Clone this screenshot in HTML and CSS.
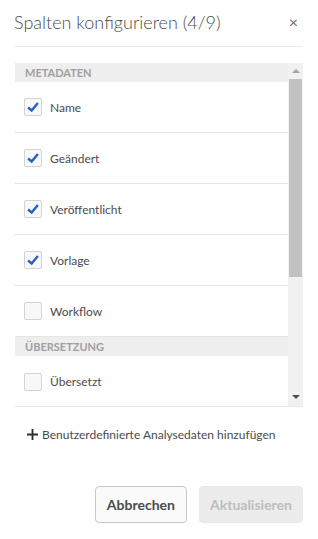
FILE: index.html
```html
<!DOCTYPE html>
<html lang="de">
<head>
    <meta charset="UTF-8">
    <meta name="viewport" content="width=device-width, initial-scale=1.0">
    <title>Spalten konfigurieren</title>
    <link rel="stylesheet" href="styles.css">
</head>
<body>
    <div class="dialog">
        <div class="dialog-header">
            <h1>Spalten konfigurieren (4/9)</h1>
            <span class="close">&times;</span>
        </div>

        <!-- Column list with scrollbar -->
        <div class="column-list">
            <div class="items">
                <div class="group-title">METADATEN</div>
                <label class="item"><span class="check checked"><svg viewBox="0 0 18 18"><path d="M3.5 9.5 L7.5 13 L14.5 4.5" /></svg></span>Name</label>
                <label class="item"><span class="check checked"><svg viewBox="0 0 18 18"><path d="M3.5 9.5 L7.5 13 L14.5 4.5" /></svg></span>Geändert</label>
                <label class="item"><span class="check checked"><svg viewBox="0 0 18 18"><path d="M3.5 9.5 L7.5 13 L14.5 4.5" /></svg></span>Veröffentlicht</label>
                <label class="item"><span class="check checked"><svg viewBox="0 0 18 18"><path d="M3.5 9.5 L7.5 13 L14.5 4.5" /></svg></span>Vorlage</label>
                <label class="item"><span class="check"></span>Workflow</label>
                <div class="group-title">ÜBERSETZUNG</div>
                <label class="item"><span class="check"></span>Übersetzt</label>
            </div>
            <div class="scrollbar">
                <span class="arrow up"></span>
                <div class="thumb"></div>
                <span class="arrow down"></span>
            </div>
        </div>

        <div class="add-custom">
            <svg class="plus" viewBox="0 0 12 12"><path d="M6 0 V12 M0 6 H12" /></svg>
            Benutzerdefinierte Analysedaten hinzufügen
        </div>

        <div class="actions">
            <button class="btn">Abbrechen</button>
            <button class="btn btn-disabled" disabled>Aktualisieren</button>
        </div>
    </div>
</body>
</html>
```

FILE: styles.css
```css
* {
    box-sizing: border-box;
    margin: 0;
    padding: 0;
}

body {
    font-family: Lato, "Open Sans", sans-serif;
    background-color: #fff;
    color: #4b4b4b;
}

.dialog {
    width: 318px;
    height: 539px;
    padding: 0 15px;
}

.dialog-header {
    display: flex;
    justify-content: space-between;
    align-items: center;
    height: 47px;
    border-bottom: 1px solid #ebebeb;
    padding-bottom: 3px;
}

h1 {
    font-size: 18px;
    font-weight: 300;
    color: #4b4b4b;
    margin-left: -1px;
}

.close {
    font-size: 16px;
    color: #707070;
    margin-right: 5px;
}

.column-list {
    display: flex;
    margin-top: 16px;
    height: 344px;
    border-bottom: 1px solid #e6e6e6;
}

.items {
    flex: 1;
    overflow: hidden;
}

.group-title {
    height: 19px;
    line-height: 19px;
    background-color: #eeeeee;
    color: #a0a0a0;
    font-size: 11px;
    font-weight: 700;
    padding-left: 10px;
}

.item {
    display: flex;
    align-items: center;
    height: 51px;
    padding-left: 9px;
    font-size: 12px;
    color: #4b4b4b;
    border-bottom: 1px solid #e6e6e6;
}

.item:last-child {
    border-bottom: none;
}

.check {
    width: 18px;
    height: 18px;
    border: 1px solid #d3d3d3;
    border-radius: 2px;
    background-color: #f8f8f8;
    margin-right: 8px;
    display: flex;
}

.check svg {
    width: 16px;
    height: 16px;
    fill: none;
    stroke: #2a62c4;
    stroke-width: 2.8;
}

.scrollbar {
    width: 15px;
    background-color: #f1f1f1;
    display: flex;
    flex-direction: column;
    align-items: center;
}

.arrow {
    width: 0;
    height: 0;
    border-left: 4px solid transparent;
    border-right: 4px solid transparent;
}

.arrow.up {
    border-bottom: 4px solid #a3a3a3;
    margin-top: 6px;
}

.arrow.down {
    border-top: 4px solid #505050;
    margin-top: auto;
    margin-bottom: 7px;
}

.thumb {
    width: 13px;
    height: 198px;
    margin-top: 6px;
    background-color: #c1c1c1;
}

.add-custom {
    display: flex;
    align-items: center;
    margin-top: 20px;
    padding-left: 12px;
    font-size: 12px;
    color: #4b4b4b;
}

.plus {
    width: 11px;
    height: 11px;
    margin-right: 4px;
    fill: none;
    stroke: #2c2c2c;
    stroke-width: 2;
}

.actions {
    display: flex;
    justify-content: flex-end;
    gap: 12px;
    margin-top: 44px;
}

.btn {
    height: 37px;
    padding: 0 11px;
    border: 1px solid #c8c8c8;
    border-radius: 4px;
    background-color: #fafafa;
    color: #4b4b4b;
    font-family: Lato, "Open Sans", sans-serif;
    font-size: 14px;
    font-weight: 700;
}

.btn-disabled {
    padding: 0 10px;
    border-color: #e8e8e8;
    background-color: #ececec;
    color: #bdbdbd;
}
```
